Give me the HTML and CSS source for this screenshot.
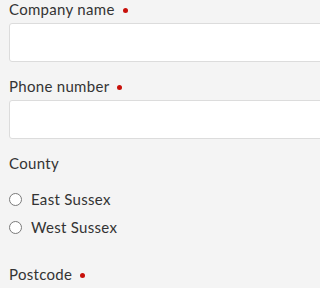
FILE: index.html
```html
<!DOCTYPE html>
<html>
<head>
<meta charset="utf-8">
<link rel="stylesheet" href="styles.css">
</head>
<body>
<form class="form">
  <div class="field">
    <label class="label">Company name <span class="req"></span></label>
    <input class="input" type="text">
  </div>
  <div class="field">
    <label class="label">Phone number <span class="req"></span></label>
    <input class="input" type="text">
  </div>
  <div class="field">
    <div class="label">County</div>
    <div class="radios">
      <label class="radio"><span class="circle"></span>East Sussex</label>
      <label class="radio"><span class="circle"></span>West Sussex</label>
    </div>
  </div>
  <div class="field">
    <label class="label">Postcode <span class="req"></span></label>
  </div>
</form>
</body>
</html>
```
FILE: styles.css
```css
html, body {
  margin: 0;
  padding: 0;
  background: #f4f4f4;
  overflow: hidden;
}
body {
  font-family: Lato, "Open Sans", sans-serif;
  font-size: 15px;
  letter-spacing: 0.3px;
  color: #333;
}
.form {
  padding: 0 0 0 9px;
  margin-top: -1px;
  overflow: hidden;
}
.field {
  display: flex;
  flex-direction: column;
  margin-bottom: 14px;
}
.label {
  display: flex;
  align-items: center;
  line-height: 20px;
  margin-bottom: 4px;
}
.req {
  display: inline-block;
  width: 5px;
  height: 5px;
  border-radius: 50%;
  background: #c8100a;
  margin-left: 8px;
  margin-top: 2px;
}
.input {
  box-sizing: border-box;
  width: 320px;
  height: 39px;
  border: 1px solid #dcdcdc;
  border-radius: 3px;
  background: #fff;
  margin: 0;
}
.radios {
  display: flex;
  flex-direction: column;
  gap: 8px;
  margin-top: 12px;
  margin-bottom: 13px;
}
.radio {
  display: flex;
  align-items: center;
  line-height: 20px;
}
.circle {
  box-sizing: border-box;
  width: 13px;
  height: 13px;
  border: 1px solid #7a7a7a;
  border-radius: 50%;
  background: #fff;
  margin: 0 9px 0 0;
}
```
